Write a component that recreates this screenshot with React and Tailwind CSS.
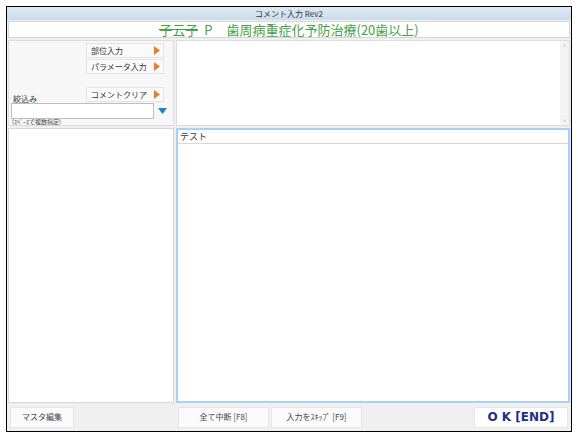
import React from "react";

const font = { fontFamily: '"Noto Sans CJK JP", "Liberation Sans", sans-serif' };

function Tri({ dir = "right", color }) {
  if (dir === "right") {
    return (
      <svg width="6" height="9" viewBox="0 0 6 9">
        <path d="M0 0 L6 4.5 L0 9 Z" fill={color} />
      </svg>
    );
  }
  return (
    <svg width="9" height="6" viewBox="0 0 9 6">
      <path d="M0 0 L9 0 L4.5 6 Z" fill={color} />
    </svg>
  );
}

function SideButton({ label }) {
  return (
    <div className="flex h-[15px] w-[78px] items-center justify-between border border-[#e4e4e4] bg-[#fafafa] pl-[4px] pr-[3px] text-[8px] text-[#333]">
      <span>{label}</span>
      <Tri color="#f07b2a" />
    </div>
  );
}

function FooterButton({ label, className = "" }) {
  return (
    <div className={`flex h-[21px] items-center justify-center border border-[#e6e6e6] bg-[#fbfbfb] text-[8px] text-[#444] ${className}`}>
      {label}
    </div>
  );
}

export default function App() {
  return (
    <div className="h-[440px] w-[578px] bg-white pl-[6px] pt-[6px]" style={font}>
      <div className="flex h-[426px] w-[566px] flex-col border border-black bg-[#f0f0f0]">
        {/* title bar */}
        <div className="flex h-[13px] items-center justify-center bg-gradient-to-b from-[#dfe9f3] to-[#cbdcec] text-[8px] text-[#333]">
          コメント入力 Rev2
        </div>

        {/* green heading */}
        <div className="mx-[1px] mt-[1px] flex h-[17px] items-center justify-center border border-[#d6d6d6] bg-white text-[13px] leading-none text-[#46a046]">
          <span className="relative">
            子云子
            <span className="absolute left-0 right-0 top-[6px] h-px bg-[#46a046]" />
          </span>
          <span className="ml-[6px]">P</span>
          <span className="ml-[14px]">歯周病重症化予防治療(20歯以上)</span>
        </div>

        {/* main */}
        <div className="flex flex-1 gap-[2px] px-[1px] pt-[2px]">
          {/* left column */}
          <div className="flex w-[166px] flex-col gap-[2px]">
            <div className="relative h-[86px] border border-[#dcdcdc] bg-[#f7f7f7]">
              <div className="absolute left-[77px] top-[2px] flex flex-col gap-[1px]">
                <SideButton label="部位入力" />
                <SideButton label="パラメータ入力" />
              </div>
              <div className="absolute left-[77px] top-[46px]">
                <SideButton label="コメントクリア" />
              </div>
              <div className="absolute left-[4px] top-[52px] text-[8px] text-[#333]">絞込み</div>
              <div className="absolute left-[2px] top-[62px] h-[16px] w-[143px] border border-[#bdbdbd] bg-white" />
              <div className="absolute left-[145px] top-[62px] flex h-[16px] w-[16px] items-center justify-center">
                <Tri dir="down" color="#1a7fd6" />
              </div>
              <div className="absolute left-[3px] top-[78px] text-[6px] leading-none text-[#444]">(ｽﾍﾟｰｽで複数指定)</div>
            </div>
            <div className="flex-1 border border-[#d6d6d6] bg-white" />
          </div>

          {/* right column */}
          <div className="flex flex-1 flex-col gap-[2px]">
            <div className="flex h-[86px] border border-[#dcdcdc] bg-white">
              <div className="flex-1" />
              <div className="flex w-[9px] flex-col items-center justify-between bg-[#f4f4f4] py-[2px] text-[5px] leading-none text-[#aaa]">
                <span>˄</span>
                <span>˅</span>
              </div>
            </div>
            <div className="flex flex-1 flex-col border-2 border-[#a9d1f7] bg-white">
              <div className="h-[14px] border-b border-[#d8d8d8] pl-[2px] text-[9px] leading-[13px] text-[#333]">
                テスト
              </div>
              <div className="flex-1" />
            </div>
          </div>
        </div>

        {/* footer */}
        <div className="flex h-[28px] items-center px-[3px]">
          <FooterButton label="マスタ編集" className="w-[64px]" />
          <FooterButton label="全て中断 [F8]" className="ml-[104px] w-[91px]" />
          <FooterButton label="入力をｽｷｯﾌﾟ [F9]" className="ml-[2px] w-[91px]" />
          <div className="ml-auto flex h-[21px] w-[94px] items-center justify-center border border-[#e6e6e6] bg-white text-[12px] font-bold text-[#1c2f8a]" style={{ fontFamily: '"DejaVu Sans", sans-serif' }}>
            O K [END]
          </div>
        </div>
      </div>
    </div>
  );
}
